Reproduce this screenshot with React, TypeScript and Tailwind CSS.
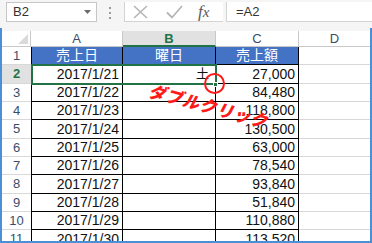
import React from 'react';

const rows: [string, string][] = [
  ['2017/1/21', '27,000'],
  ['2017/1/22', '84,480'],
  ['2017/1/23', '118,800'],
  ['2017/1/24', '130,500'],
  ['2017/1/25', '63,000'],
  ['2017/1/26', '78,540'],
  ['2017/1/27', '93,840'],
  ['2017/1/28', '51,840'],
  ['2017/1/29', '110,880'],
  ['2017/1/30', '113,520'],
];

// screenshot was scaled a little, so a few rows are one pixel taller
const tall = [true, false, false, true, false, false, true, false, false, true];

const jp = "font-['Liberation_Sans','Noto_Sans_CJK_JP',sans-serif]";

function FormulaBar() {
  return (
    <div className="flex h-[28px] items-start pt-[2px]">
      {/* name box */}
      <div className="ml-[6px] flex h-[20px] w-[91px] items-center justify-between border border-[#c6c6c6] bg-white pl-[6px] pr-[5px]">
        <span className="text-[13px] text-[#333]">B2</span>
        <svg width="7" height="4" viewBox="0 0 7 4">
          <path d="M0 0h7L3.5 4z" fill="#6a6a6a" />
        </svg>
      </div>
      <div className="ml-[12px] mr-[13px] mt-[5px] flex flex-col gap-[3px]">
        <span className="h-[2px] w-[2px] bg-[#9a9a9a]" />
        <span className="h-[2px] w-[2px] bg-[#9a9a9a]" />
        <span className="h-[2px] w-[2px] bg-[#9a9a9a]" />
      </div>
      {/* cancel / enter / fx */}
      <div className="flex h-[20px] w-[99px] items-center border-l border-b border-[#d4d4d4] bg-white">
        <svg className="ml-[8px]" width="15" height="14" viewBox="0 0 15 14">
          <path d="M1 1l13 12M14 1L1 13" stroke="#b5b5b5" strokeWidth="1.6" fill="none" />
        </svg>
        <svg className="ml-[18px]" width="17" height="14" viewBox="0 0 17 14">
          <path d="M1 7.5l5 5L16 1" stroke="#b5b5b5" strokeWidth="1.8" fill="none" />
        </svg>
        <span className="ml-[15px] font-['Liberation_Serif',serif] text-[17px] italic leading-none text-[#5a5a5a]">
          f<span className="text-[15px]">x</span>
        </span>
      </div>
      <div className="ml-[3px] flex h-[20px] flex-1 items-center border-l border-b border-[#d4d4d4] bg-white pl-[9px]">
        <span className="text-[13px] text-[#333]">=A2</span>
      </div>
    </div>
  );
}

function ColumnHeader() {
  return (
    <div className="flex h-[16px] text-[13px] leading-none text-[#3a4d6a]">
      <div className="relative w-[29px] border-r border-b border-[#c8c8c8] bg-white">
        <svg className="absolute right-[2px] bottom-[2px]" width="10" height="10" viewBox="0 0 10 10">
          <path d="M10 0v10H0z" fill="#dadada" />
        </svg>
      </div>
      <div className="flex w-[92px] items-center justify-center border-r border-b border-[#c8c8c8] bg-white">A</div>
      <div className="flex w-[93px] items-center justify-center border-r border-b-2 border-[#c8c8c8] border-b-[#217346] bg-[#e1e1e1] font-bold text-[#217346]">
        B
      </div>
      <div className="flex w-[83px] items-center justify-center border-r border-b border-[#c8c8c8] bg-white">C</div>
      <div className="flex flex-1 items-center justify-center border-b border-[#c8c8c8] bg-white">D</div>
    </div>
  );
}

function RowHead({ n, active }: { n: number; active?: boolean }) {
  return (
    <div
      className={`flex w-[29px] items-center justify-center border-b border-[#d8d8d8] text-[13px] ${
        active ? 'bg-[#e1e1e1] font-bold text-[#217346]' : 'bg-white text-[#3a4d6a]'
      }`}
    >
      {n}
    </div>
  );
}

export default function App() {
  return (
    <div className={`relative h-[243px] w-[372px] overflow-hidden bg-[#f5f5f5] ${jp}`}>
      <FormulaBar />

      <div className="h-[215px] overflow-hidden border-x-2 border-b-2 border-[#4a8fd8] pt-[3px]">
        <ColumnHeader />

        {/* header row 1 */}
        <div className="flex h-[18px]">
          <RowHead n={1} />
          <div className="flex w-[92px] items-center justify-center border-x border-b border-black bg-[#4472c4] text-[14px] text-white">
            売上日
          </div>
          <div className="flex w-[93px] items-center justify-center border-r border-b border-black bg-[#4472c4] text-[14px] text-white">
            曜日
          </div>
          <div className="flex w-[83px] items-center justify-center border-r border-b border-black bg-[#4472c4] text-[14px] text-white">
            売上額
          </div>
          <div className="flex-1 border-b border-[#d8d8d8] bg-white" />
        </div>

        {rows.map(([d, v], i) => (
          <div key={d} className={`flex text-[14px] text-[#111] ${tall[i] ? 'h-[19px]' : 'h-[18px]'}`}>
            <RowHead n={i + 2} active={i === 0} />
            <div className="flex w-[92px] items-center justify-end border-x border-b border-black bg-white pr-[3px]">{d}</div>
            <div className="flex w-[93px] items-center justify-end border-r border-b border-black bg-white pr-[6px] text-[13px]">
              {i === 0 ? '土' : ''}
            </div>
            <div className="flex w-[83px] items-center justify-end border-r border-b border-black bg-white pr-[3px]">{v}</div>
            <div className="flex-1 border-b border-[#d8d8d8] bg-white" />
          </div>
        ))}
      </div>

      {/* selection outline + fill handle */}
      <div className="absolute left-[31px] top-[64px] h-[21px] w-[186px] border-2 border-[#217346]" />
      <div className="absolute left-[213px] top-[82px] h-[5px] w-[5px] border border-white bg-[#217346]" />

      {/* annotation */}
      <div className="absolute left-[204px] top-[73px] h-[21px] w-[21px] rounded-full border-2 border-[#ff1a1a]" />
      <div className="absolute left-[150px] top-[79px] origin-left rotate-[15deg] -skew-x-12 whitespace-nowrap text-[17px] font-black tracking-[0.5px] text-[#ff1a1a]">
        ダブルクリック
      </div>
    </div>
  );
}
